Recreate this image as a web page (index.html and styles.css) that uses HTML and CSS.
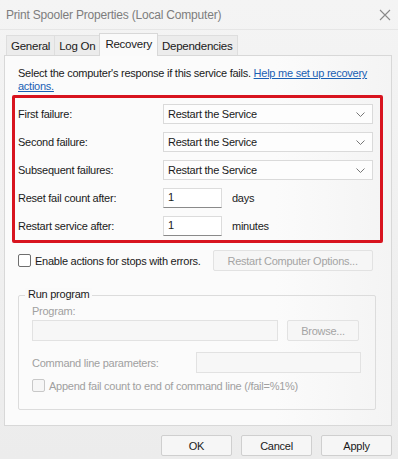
FILE: index.html
```html
<!DOCTYPE html>
<html lang="en">

<head>
    <meta charset="UTF-8">
    <title>Print Spooler Properties (Local Computer)</title>
    <link rel="stylesheet" href="styles.css">
</head>

<body>
    <div class="window">
        <div class="titlebar">
            <span class="title">Print Spooler Properties (Local Computer)</span>
            <svg class="close" width="12" height="12" viewBox="0 0 12 12">
                <path d="M1 1 L11 11 M11 1 L1 11" stroke="#8a8a8a" stroke-width="1.1" fill="none" />
            </svg>
        </div>

        <div class="tabs">
            <span class="tab">General</span>
            <span class="tab">Log On</span>
            <span class="tab active">Recovery</span>
            <span class="tab">Dependencies</span>
        </div>

        <div class="panel">
            <p class="intro">Select the computer's response if this service fails. <a href="#">Help me set up recovery actions.</a></p>

            <div class="highlight">
                <div class="row">
                    <span class="label">First failure:</span>
                    <div class="select">Restart the Service<svg class="caret" width="9" height="5" viewBox="0 0 9 5"><path d="M0.5 0.5 L4.5 4.5 L8.5 0.5" stroke="#777" fill="none" /></svg></div>
                </div>
                <div class="row">
                    <span class="label">Second failure:</span>
                    <div class="select">Restart the Service<svg class="caret" width="9" height="5" viewBox="0 0 9 5"><path d="M0.5 0.5 L4.5 4.5 L8.5 0.5" stroke="#777" fill="none" /></svg></div>
                </div>
                <div class="row">
                    <span class="label">Subsequent failures:</span>
                    <div class="select">Restart the Service<svg class="caret" width="9" height="5" viewBox="0 0 9 5"><path d="M0.5 0.5 L4.5 4.5 L8.5 0.5" stroke="#777" fill="none" /></svg></div>
                </div>
                <div class="row">
                    <span class="label">Reset fail count after:</span>
                    <div class="field">1</div>
                    <span class="unit">days</span>
                </div>
                <div class="row">
                    <span class="label">Restart service after:</span>
                    <div class="field">1</div>
                    <span class="unit">minutes</span>
                </div>
            </div>

            <div class="stops">
                <span class="check"></span>
                <span class="stops-text">Enable actions for stops with errors.</span>
                <button class="btn wide" disabled>Restart Computer Options...</button>
            </div>

            <div class="group">
                <span class="legend">Run program</span>
                <div class="muted prog-label">Program:</div>
                <div class="prog-row">
                    <div class="box long"></div>
                    <button class="btn browse" disabled>Browse...</button>
                </div>
                <div class="cmd-row">
                    <span class="muted">Command line parameters:</span>
                    <div class="box cmd"></div>
                </div>
                <div class="append">
                    <span class="check off"></span>
                    <span class="muted">Append fail count to end of command line (/fail=%1%)</span>
                </div>
            </div>
        </div>

        <div class="footer">
            <button class="btn action">OK</button>
            <button class="btn action">Cancel</button>
            <button class="btn action">Apply</button>
        </div>
    </div>
</body>

</html>
```

FILE: styles.css
```css
* {
    padding: 0;
    margin: 0;
    box-sizing: border-box;
}

body {
    background-color: #efefef;
    font-family: "Liberation Sans", Arial, sans-serif;
    font-size: 11px;
    letter-spacing: -0.25px;
    color: #1a1a1a;
}

.window {
    width: 398px;
    height: 459px;
    background: linear-gradient(to bottom, #f4f4f4, #ececec);
}

.titlebar {
    height: 30px;
    display: flex;
    align-items: center;
    justify-content: space-between;
    padding: 0 7px 0 6px;
    border-bottom: 1px solid #e6e6e6;
}

.title {
    color: #7d7d7d;
    font-size: 12px;
    letter-spacing: -0.2px;
}

.tabs {
    display: flex;
    align-items: flex-end;
    height: 25px;
    padding-left: 6px;
}

.tab {
    height: 20px;
    line-height: 20px;
    padding: 0 4px;
    background-color: #ececec;
    border: 1px solid #dedede;
    border-bottom: none;
    margin-right: -1px;
    font-size: 11.5px;
}

.tab.active {
    height: 23px;
    line-height: 20px;
    padding: 0 5px;
    background-color: #fafafa;
    border-color: #d8d8d8;
    position: relative;
    z-index: 1;
    margin-bottom: -1px;
}

.panel {
    margin: 0 6px 0 4px;
    height: 371px;
    border: 1px solid #d8d8d8;
    background: linear-gradient(to right, #fbfbfb 70%, #f4f4f4);
    padding-top: 11px;
}

.intro {
    padding-left: 13px;
    line-height: 13px;
    width: 385px;
}

.intro a {
    color: #1a5fb4;
}

.highlight {
    margin: 2px 0 0 7px;
    width: 371px;
    border: 3px solid #d8141f;
    border-radius: 2px;
    padding: 6px 7px 4px 3px;
    display: flex;
    flex-direction: column;
    gap: 8px;
}

.row {
    display: flex;
    align-items: center;
    height: 20px;
}

.label {
    width: 145px;
}

.select {
    flex: 1;
    height: 20px;
    display: flex;
    align-items: center;
    justify-content: space-between;
    padding: 0 7px 0 4px;
    background-color: #fdfdfd;
    border: 1px solid #dadada;
}

.field {
    width: 59px;
    height: 20px;
    padding: 2px 0 0 4px;
    background-color: #fff;
    border: 1px solid #dcdcdc;
    border-bottom-color: #8a8a8a;
}

.unit {
    margin-left: 10px;
}

.stops {
    display: flex;
    align-items: center;
    height: 21px;
    margin: 7px 0 0 13px;
}

.check {
    width: 13px;
    height: 13px;
    border: 1px solid #6e6e6e;
    border-radius: 2px;
    background-color: #fff;
}

.check.off {
    border-color: #c8c8c8;
    background-color: #f6f6f6;
}

.stops-text {
    margin-left: 4px;
}

.btn {
    font-family: inherit;
    font-size: 11px;
    letter-spacing: -0.25px;
    height: 21px;
    border: 1px solid #d6d6d6;
    border-radius: 2px;
    background-color: #f4f4f4;
    color: #1a1a1a;
}

.btn[disabled] {
    color: #a4a4a4;
    background-color: #f6f6f6;
    border-color: #e2e2e2;
}

.wide {
    width: 160px;
    margin-left: 12px;
}

.group {
    position: relative;
    margin: 24px 0 0 13px;
    width: 358px;
    height: 115px;
    border: 1px solid #dcdcdc;
    border-radius: 2px;
    padding: 9px 0 0 13px;
}

.legend {
    position: absolute;
    top: -8px;
    left: 6px;
    padding: 0 3px;
    background-color: #fafafa;
}

.muted {
    color: #a0a0a0;
}

.prog-row {
    display: flex;
    align-items: center;
    margin-top: 3px;
}

.box {
    height: 21px;
    border: 1px solid #e2e2e2;
    background-color: #f7f7f7;
}

.long {
    width: 246px;
}

.browse {
    width: 72px;
    margin-left: 9px;
}

.cmd-row {
    display: flex;
    align-items: center;
    justify-content: space-between;
    margin: 11px 14px 0 0;
}

.cmd {
    width: 165px;
}

.append {
    display: flex;
    align-items: center;
    gap: 4px;
    margin-top: 6px;
}

.footer {
    display: flex;
    justify-content: flex-end;
    gap: 9px;
    padding: 9px 6px 0 0;
}

.action {
    width: 71px;
    height: 21px;
    background-color: #f6f6f6;
    border-color: #cfcfcf;
}
```
